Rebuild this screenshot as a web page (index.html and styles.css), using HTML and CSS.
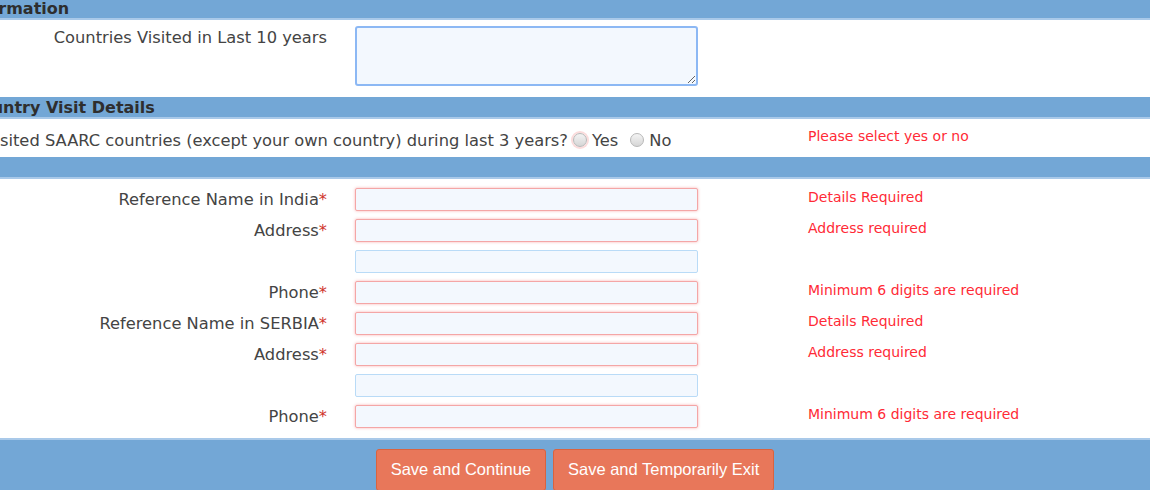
FILE: index.html
```html
<!DOCTYPE html>
<html lang="en">

<head>
    <title>Visa Application - Reference Details</title>
    <link rel="stylesheet" href="styles.css">
</head>

<body>
    <div class="form-wrap">
        <!--Previous visits-->
        <div class="section-header"><span class="cut-info">Information</span></div>
        <div class="section-body first">
            <div class="row tall">
                <label class="lbl">Countries Visited in Last 10 years</label>
                <textarea class="area"></textarea>
                <span class="err"></span>
            </div>
        </div>

        <!--SAARC question-->
        <div class="section-header"><span class="cut-saarc">SAARC Country Visit Details</span></div>
        <div class="question-row">
            <div class="question"><span>Have you visited SAARC countries (except your own country) during last 3 years?</span></div>
            <div class="choices">
                <label class="choice"><input type="radio" name="saarc" class="radio bad">Yes</label>
                <label class="choice"><input type="radio" name="saarc" class="radio">No</label>
            </div>
            <span class="err q-err">Please select yes or no</span>
        </div>

        <!--References-->
        <div class="section-header"></div>
        <div class="section-body refs">
            <div class="row">
                <label class="lbl">Reference Name in India<span class="req">*</span></label>
                <input type="text" class="field bad">
                <span class="err">Details Required</span>
            </div>
            <div class="row">
                <label class="lbl">Address<span class="req">*</span></label>
                <input type="text" class="field bad">
                <span class="err">Address required</span>
            </div>
            <div class="row">
                <label class="lbl"></label>
                <input type="text" class="field">
                <span class="err"></span>
            </div>
            <div class="row">
                <label class="lbl">Phone<span class="req">*</span></label>
                <input type="text" class="field bad">
                <span class="err">Minimum 6 digits are required</span>
            </div>
            <div class="row">
                <label class="lbl">Reference Name in SERBIA<span class="req">*</span></label>
                <input type="text" class="field bad">
                <span class="err">Details Required</span>
            </div>
            <div class="row">
                <label class="lbl">Address<span class="req">*</span></label>
                <input type="text" class="field bad">
                <span class="err">Address required</span>
            </div>
            <div class="row">
                <label class="lbl"></label>
                <input type="text" class="field">
                <span class="err"></span>
            </div>
            <div class="row">
                <label class="lbl">Phone<span class="req">*</span></label>
                <input type="text" class="field bad">
                <span class="err">Minimum 6 digits are required</span>
            </div>
        </div>

        <!--Buttons-->
        <div class="form-footer">
            <button class="btn">Save and Continue</button>
            <button class="btn">Save and Temporarily Exit</button>
        </div>
    </div>
</body>

</html>
```

FILE: styles.css
```css
body {
    margin: 0;
    font-family: "DejaVu Sans", Verdana, sans-serif;
    font-size: 16.3px;
    color: #444;
    overflow: hidden;
}

div.form-wrap {
    margin-top: -2px;
}

/*Blue section bars*/
div.section-header {
    background: #73a7d6;
    border-bottom: 2px solid #a9c9e9;
    height: 20px;
    font-weight: bold;
    font-size: 16px;
    color: #2e2e2e;
    line-height: 22px;
    white-space: nowrap;
    overflow: hidden;
}

.cut-info {
    margin-left: -37px;
}

.cut-saarc {
    margin-left: -97px;
}

/*Rows: label | input | error*/
.row {
    display: grid;
    grid-template-columns: 327px 343px 1fr;
    column-gap: 28px;
    align-items: center;
    height: 31px;
}

.row.tall {
    height: 60px;
    align-items: start;
}

.section-body.first {
    padding: 6px 0 11px;
}

.section-body.refs {
    padding: 5px 0 6px;
}

.lbl {
    text-align: right;
    white-space: nowrap;
}

.row.tall .lbl {
    padding-top: 2px;
}

.req {
    color: #d0342c;
}

.err {
    color: #ff2a36;
    font-size: 14px;
    padding-left: 82px;
    padding-bottom: 5px;
    white-space: nowrap;
}

.area {
    box-sizing: border-box;
    width: 343px;
    height: 60px;
    margin: 0;
    border: 2px solid #8cb8f4;
    border-radius: 3px;
    background: #f3f8fe;
    resize: vertical;
}

.field {
    box-sizing: border-box;
    width: 343px;
    height: 23px;
    margin: 0;
    border: 1px solid #b9dbf7;
    border-radius: 2px;
    background: #f3f8fe;
}

.field.bad {
    border-color: #f4a6a6;
    box-shadow: 0 0 3px rgba(240, 80, 80, 0.45);
}

/*SAARC question*/
.question-row {
    display: grid;
    grid-template-columns: 568px 130px 1fr;
    height: 38px;
    align-items: center;
}

.question {
    display: flex;
    justify-content: flex-end;
    white-space: nowrap;
    padding-top: 4px;
}

.choices {
    display: flex;
    gap: 12px;
    padding-top: 4px;
    padding-left: 5px;
}

.choice {
    display: flex;
    align-items: center;
    color: #444;
}

.radio {
    margin: 0 5px 0 0;
    width: 14px;
    height: 14px;
    appearance: none;
    border: 1px solid #b8b8b8;
    border-radius: 50%;
    background: linear-gradient(#f4f4f4, #d6d6d6);
}

.radio.bad {
    box-shadow: 0 0 0 2px #fbdcdc;
}

.q-err {
    padding-left: 110px;
    padding-bottom: 4px;
}

/*Footer bar*/
div.form-footer {
    background: #73a7d6;
    border-top: 2px solid #a9c9e9;
    height: 60px;
    display: flex;
    justify-content: center;
    align-items: flex-start;
    gap: 7px;
    padding-top: 9px;
}

.btn {
    font-family: "Liberation Sans", Arial, sans-serif;
    font-size: 16.5px;
    color: #fff;
    background: #e8775a;
    border: 1px solid #d9633f;
    border-radius: 3px;
    padding: 10px 14px 11px;
}
```
